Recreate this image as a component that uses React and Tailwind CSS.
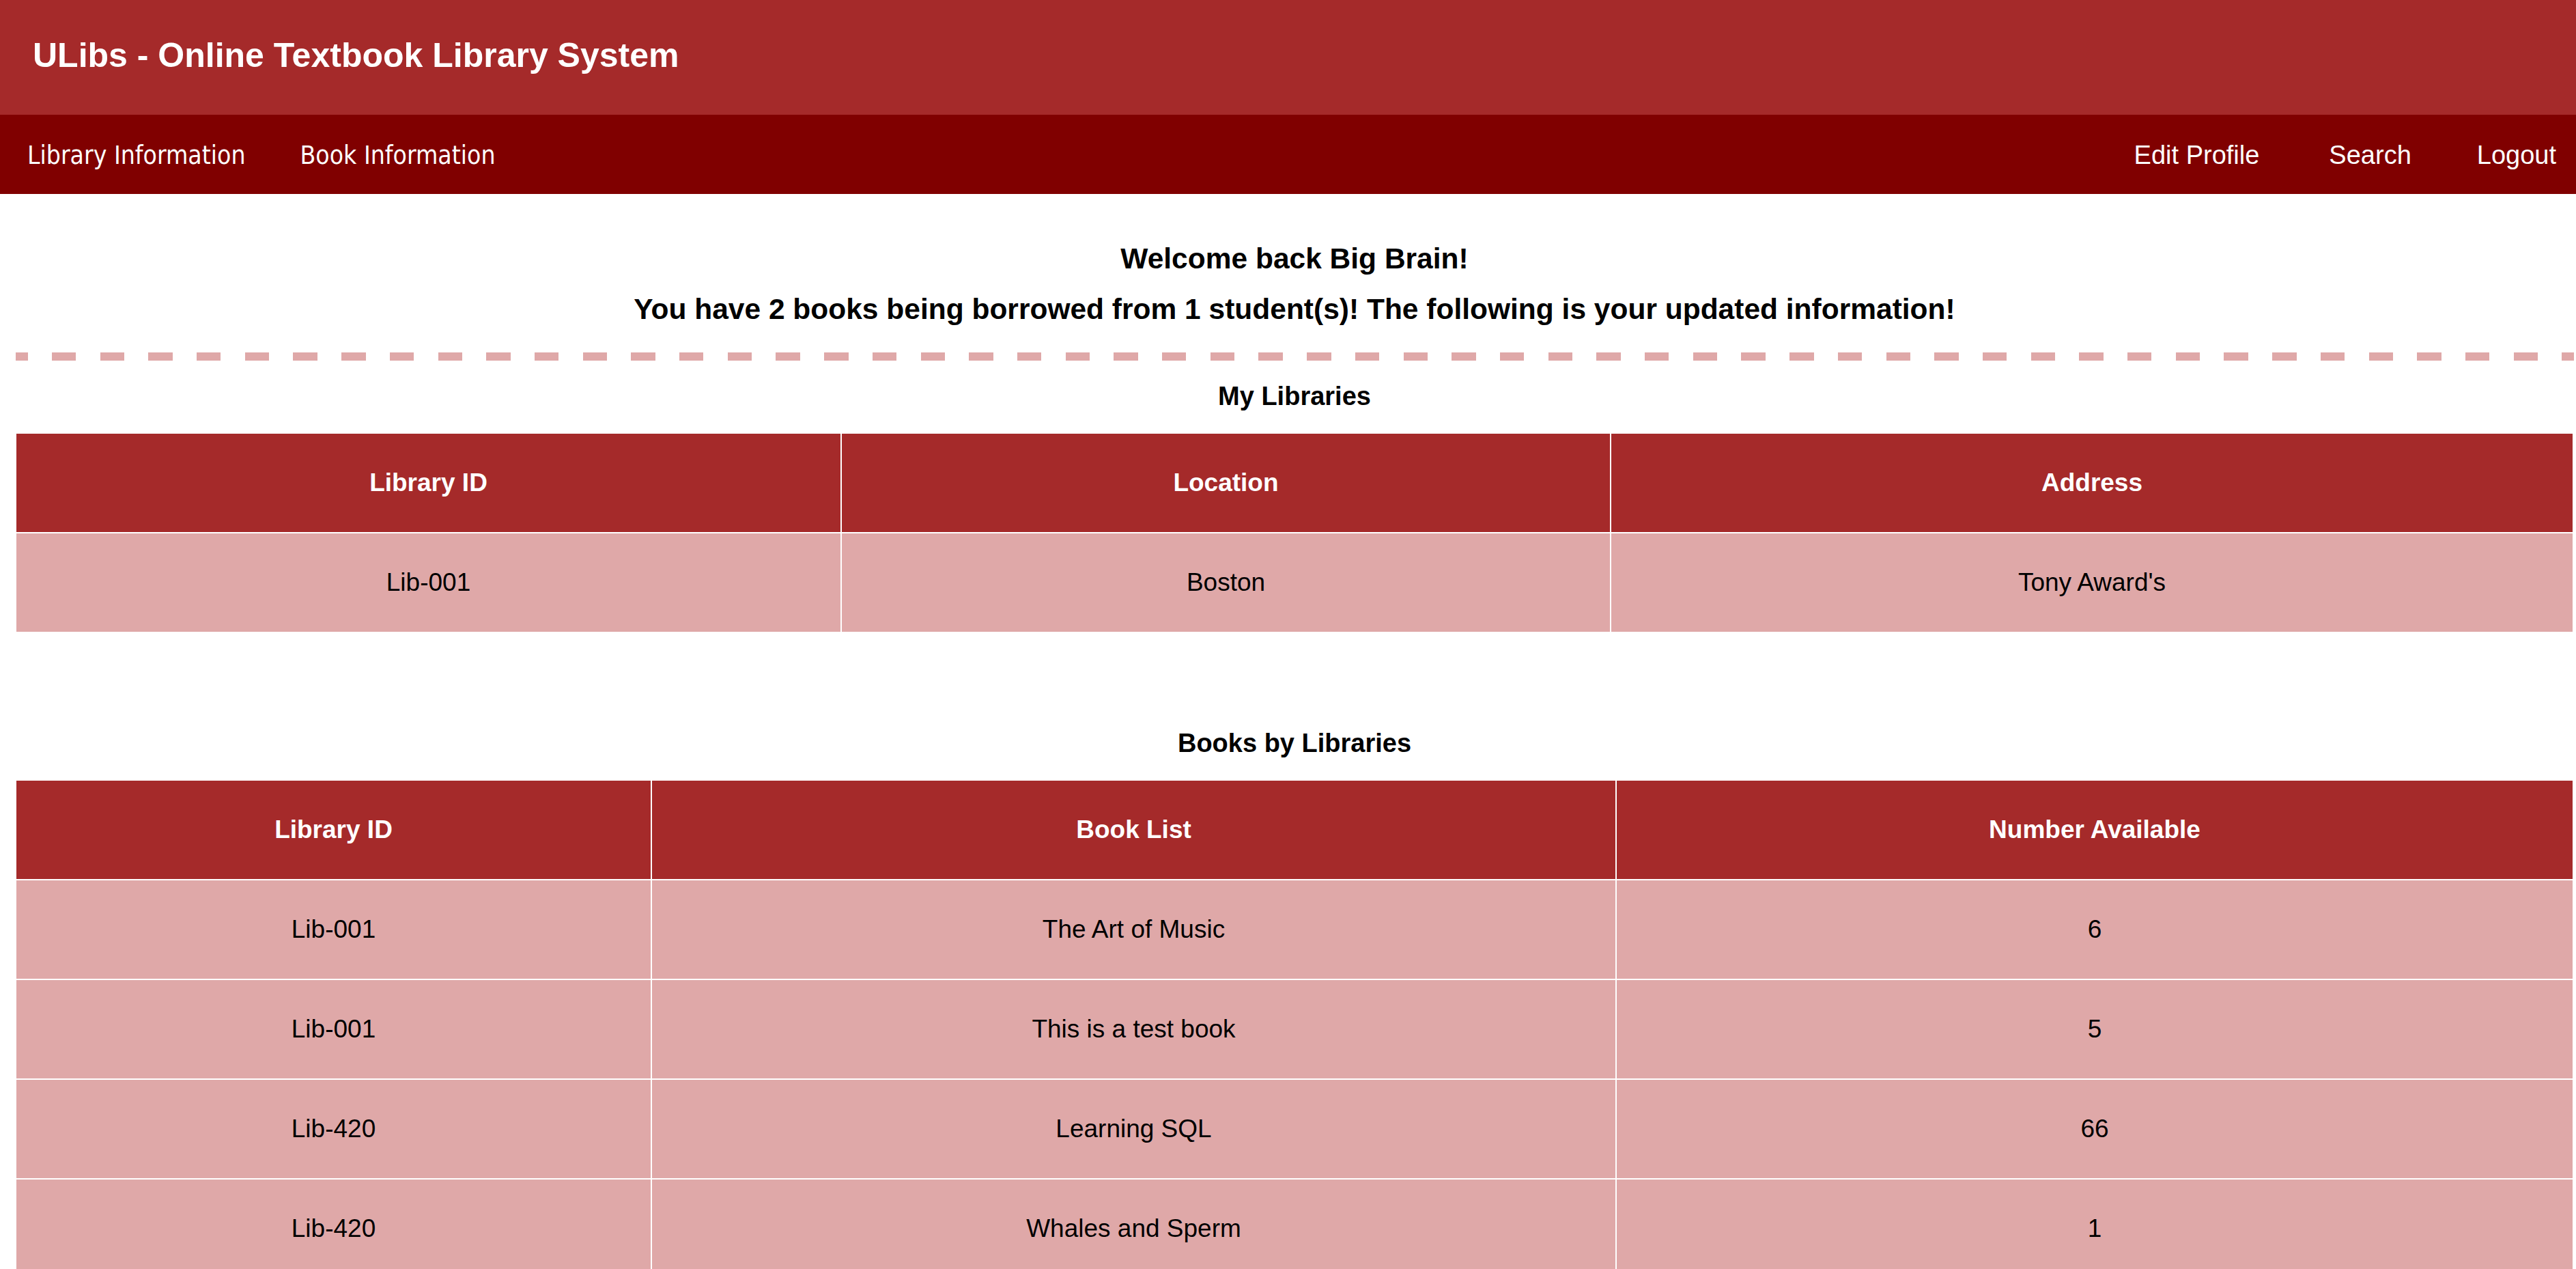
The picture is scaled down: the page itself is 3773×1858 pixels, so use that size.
const libraries = [
  { id: 'Lib-001', location: 'Boston', address: "Tony Award's" },
];

const books = [
  { libId: 'Lib-001', title: 'The Art of Music', available: 6 },
  { libId: 'Lib-001', title: 'This is a test book', available: 5 },
  { libId: 'Lib-420', title: 'Learning SQL', available: 66 },
  { libId: 'Lib-420', title: 'Whales and Sperm', available: 1 },
];

function HeadCell({ children }) {
  return (
    <div className="h-[144px] flex items-center justify-center bg-[#a52a2a] text-white font-bold text-[37px]">
      {children}
    </div>
  );
}

function Cell({ children }) {
  return (
    <div className="h-[144px] flex items-center justify-center bg-[#dfa8a8] text-black text-[37px]">
      {children}
    </div>
  );
}

export default function App() {
  return (
    <div className="min-h-screen bg-white font-['Liberation_Sans',Arial,sans-serif]">
      {/* Title bar */}
      <header className="h-[168px] bg-[#a52a2a] px-[48px] pt-[52px]">
        <h1 className="text-white font-bold text-[50px] leading-[58px]">ULibs - Online Textbook Library System</h1>
      </header>

      {/* Nav */}
      <nav className="h-[116px] bg-[#800000] flex items-center pt-[3px] text-white text-[38px]">
        <div className="flex items-center pl-[40px] gap-[80px] text-[37px] font-['DejaVu_Sans_Condensed','DejaVu_Sans',sans-serif] font-stretch-condensed">
          <a href="#">Library Information</a>
          <a href="#">Book Information</a>
        </div>
        <div className="ml-auto flex items-center pr-[29px]">
          <a href="#">Edit Profile</a>
          <a href="#" className="ml-[102px]">Search</a>
          <a href="#" className="ml-[96px]">Logout</a>
        </div>
      </nav>

      <main className="pl-[24px] pr-[5px] text-black">
        <h3 className="mt-[71px] text-center font-bold text-[42.5px] leading-[48px]">Welcome back Big Brain!</h3>
        <h3 className="mt-[26px] text-center font-bold text-[42.5px] leading-[48px]">
          You have 2 books being borrowed from 1 student(s)! The following is your updated information!
        </h3>

        {/* dashed divider */}
        <div className="mt-[39px] -ml-px -mr-[2px] h-[12px] bg-[repeating-linear-gradient(90deg,#dfa8a8_0px,#dfa8a8_17.7px,transparent_17.7px,transparent_53px,#dfa8a8_53px,#dfa8a8_70.7px)]" />

        <h4 className="mt-[30px] text-center font-bold text-[38px] leading-[44px]">My Libraries</h4>
        <div className="mt-[33px] grid grid-cols-[1207px_1125px_1fr] gap-[2px]">
          <HeadCell>Library ID</HeadCell>
          <HeadCell>Location</HeadCell>
          <HeadCell>Address</HeadCell>
          {libraries.map((lib) => [
            <Cell key={lib.id + 'a'}>{lib.id}</Cell>,
            <Cell key={lib.id + 'b'}>{lib.location}</Cell>,
            <Cell key={lib.id + 'c'}>{lib.address}</Cell>,
          ])}
        </div>

        <h4 className="mt-[141px] text-center font-bold text-[38px] leading-[44px]">Books by Libraries</h4>
        <div className="mt-[33px] grid grid-cols-[929px_1411px_1fr] gap-[2px]">
          <HeadCell>Library ID</HeadCell>
          <HeadCell>Book List</HeadCell>
          <HeadCell>Number Available</HeadCell>
          {books.map((b, i) => [
            <Cell key={i + 'a'}>{b.libId}</Cell>,
            <Cell key={i + 'b'}>{b.title}</Cell>,
            <Cell key={i + 'c'}>{b.available}</Cell>,
          ])}
        </div>
      </main>
    </div>
  );
}
